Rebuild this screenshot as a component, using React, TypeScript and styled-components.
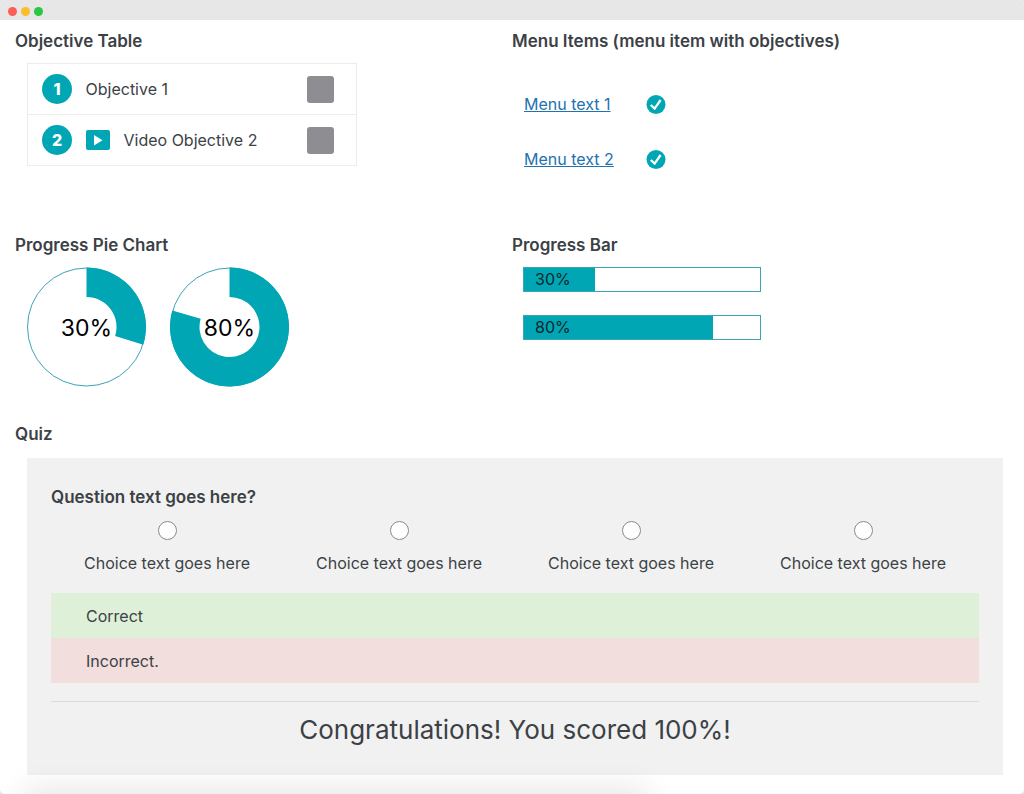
import React from "react";
import styled, { createGlobalStyle } from "styled-components";

const teal = "#00a6b4";
const ink = "#3c4146";

const GlobalStyle = createGlobalStyle`
  *, *::before, *::after { box-sizing: border-box; }
  body {
    margin: 0;
    background: #e4e4e4;
    color: ${ink};
    font: 400 16px/24px Inter, "Liberation Sans", sans-serif;
  }
`;

const Window = styled.div`
  position: relative;
  display: flex;
  flex-direction: column;
  min-height: 100vh;
  overflow: hidden;
  background: #fff;
  border-radius: 5px;
`;

const TitleBar = styled.header`
  display: flex;
  align-items: center;
  gap: 4px;
  height: 20px;
  padding: 2px 8px 0;
  background: #e7e7e7;
`;

const Light = styled.span<{ $color: string }>`
  width: 9px;
  height: 9px;
  border-radius: 50%;
  background: ${(p) => p.$color};
`;

const Content = styled.main`
  display: grid;
  grid-template-columns: 1fr 1fr;
  padding: 9px 15px 18px;
`;

const Section = styled.section<{ $wide?: boolean; $space?: number }>`
  grid-column: ${(p) => (p.$wide ? "1 / -1" : "auto")};
  padding-bottom: ${(p) => p.$space ?? 0}px;
`;

const Heading = styled.h2`
  margin: 0;
  font-size: 17px;
  line-height: 24px;
  font-weight: 600;
`;

const ObjectiveTable = styled.table`
  width: 330px;
  max-width: 100%;
  margin: 10px 0 0 12px;
  border: 1px solid #ececec;
  border-collapse: collapse;
`;

const ObjectiveRow = styled.tr`
  height: 51px;
  border-top: 1px solid #ececec;
`;

const NumberCell = styled.th`
  width: 58px;
  padding: 0 0 0 14px;
`;

const NumberBadge = styled.span`
  display: flex;
  align-items: center;
  justify-content: center;
  width: 30px;
  height: 30px;
  border-radius: 50%;
  background: ${teal};
  color: #fff;
  font-weight: 800;
`;

const NameCell = styled.td`
  padding: 0;
`;

const ObjectiveName = styled.label`
  display: flex;
  align-items: center;
  gap: 14px;
`;

const StatusCell = styled.td`
  width: 50px;
  padding: 0;
`;

const StatusBox = styled.input`
  appearance: none;
  display: block;
  width: 27px;
  height: 27px;
  margin: 0;
  border-radius: 3px;
  background: #8e8e92;
  &:checked { background: ${teal}; }
`;

const MenuList = styled.ul`
  display: flex;
  flex-direction: column;
  gap: 31px;
  margin: 39px 0 0 12px;
  padding: 0;
  list-style: none;
`;

const MenuItem = styled.li`
  display: grid;
  grid-template-columns: 122px 20px;
  align-items: center;
`;

const MenuLink = styled.a`
  justify-self: start;
  color: #2271b1;
`;

const PieRow = styled.div`
  display: flex;
  gap: 23px;
  margin: 10px 0 0 11px;
`;

const PieText = styled.text`
  fill: #000;
  font-size: 23px;
  text-anchor: middle;
`;

const BarList = styled.div`
  display: flex;
  flex-direction: column;
  gap: 23px;
  width: 238px;
  margin: 10px 0 0 11px;
`;

const Bar = styled.div`
  height: 25px;
  border: 1px solid #3aa5b4;
`;

const BarFill = styled.div`
  height: 100%;
  padding-left: 11px;
  background: ${teal};
  color: #08282b;
  line-height: 23px;
`;

const Quiz = styled.form`
  margin: 12px 6px 0 12px;
  padding: 27px 24px;
  background: #f1f1f1;
`;

const Question = styled.fieldset`
  margin: 0;
  padding: 0;
  border: 0;
`;

const QuestionText = styled.legend`
  padding: 0;
  font-size: 17px;
  font-weight: 600;
`;

const Choices = styled.div`
  display: grid;
  grid-template-columns: repeat(4, 1fr);
  padding: 12px 0 18px;
`;

const Choice = styled.label`
  display: flex;
  flex-direction: column;
  align-items: center;
  gap: 11px;
`;

const Radio = styled.input`
  appearance: none;
  width: 19px;
  height: 19px;
  margin: 0;
  border: 1px solid #8a8a8a;
  border-radius: 50%;
  background: #fff;
  &:checked { border: 6px solid ${teal}; }
`;

const Feedback = styled.p<{ $tone: "correct" | "incorrect" }>`
  margin: 0;
  padding: 11px 35px 10px;
  background: ${(p) => (p.$tone === "correct" ? "#def0d8" : "#f1dedd")};
`;

const Divider = styled.hr`
  height: 1px;
  margin: 18px 0 10px;
  border: 0;
  background: #dcdcde;
`;

const Score = styled.p`
  margin: 0;
  font-size: 26px;
  line-height: 36px;
  text-align: center;
`;

const BottomShade = styled.div`
  position: absolute;
  left: 24px;
  right: 376px;
  bottom: -20px;
  height: 20px;
  box-shadow: 0 0 32px rgba(0, 0, 0, 0.16);
`;

function VideoIcon() {
  return (
    <svg width="24" height="20" viewBox="0 0 24 20" aria-hidden="true">
      <rect width="24" height="20" rx="2" fill={teal} />
      <path d="M8 5v10.500l8.500-5.250z" fill="#fff" />
    </svg>
  );
}

function CheckIcon() {
  return (
    <svg width="20" height="20" viewBox="0 0 20 20" aria-hidden="true">
      <circle cx="10" cy="10.500" r="9.500" fill={teal} />
      <path d="M4.800 11l3.800 3.600 6-8.600" fill="none" stroke="#fff" strokeWidth="2.300" />
    </svg>
  );
}

function Pie({ value }: { value: number }) {
  const angle = (value / 100) * 2 * Math.PI * 0.993;
  const point = (r: number) => `${60.5 + r * Math.sin(angle)} ${60 - r * Math.cos(angle)}`;
  const large = value > 50 ? 1 : 0;
  return (
    <svg width="120" height="120" viewBox="0 0 120 120" role="img" aria-label={`${value}%`}>
      <circle cx="60.500" cy="60" r="59" fill="#fff" stroke="#3aa5b4" />
      <path
        d={`M60.500 0.500A59.500 59.500 0 ${large} 1 ${point(59.5)}L${point(30)}A30 30 0 ${large} 0 60.500 30z`}
        fill={teal}
      />
      <PieText x="60.500" y="69">{value}%</PieText>
    </svg>
  );
}

const objectives = [
  { id: 1, name: "Objective 1", video: false },
  { id: 2, name: "Video Objective 2", video: true },
];
const progress = [30, 80];
const choices = [1, 2, 3, 4];

export default function App() {
  return (
    <>
      <GlobalStyle />
      <Window>
        <TitleBar>
          <Light $color="#fb5f57" />
          <Light $color="#f9bd2e" />
          <Light $color="#29c840" />
        </TitleBar>
        <Content>
          <Section $space={67}>
            <Heading>Objective Table</Heading>
            <ObjectiveTable>
              <tbody>
                {objectives.map((o) => (
                  <ObjectiveRow key={o.id}>
                    <NumberCell scope="row">
                      <NumberBadge>{o.id}</NumberBadge>
                    </NumberCell>
                    <NameCell>
                      <ObjectiveName htmlFor={`objective-${o.id}`}>
                        {o.video && <VideoIcon />}
                        {o.name}
                      </ObjectiveName>
                    </NameCell>
                    <StatusCell>
                      <StatusBox type="checkbox" id={`objective-${o.id}`} />
                    </StatusCell>
                  </ObjectiveRow>
                ))}
              </tbody>
            </ObjectiveTable>
          </Section>
          <Section>
            <Heading>Menu Items (menu item with objectives)</Heading>
            <MenuList>
              {[1, 2].map((n) => (
                <MenuItem key={n}>
                  <MenuLink href={`#menu-${n}`}>Menu text {n}</MenuLink>
                  <CheckIcon />
                </MenuItem>
              ))}
            </MenuList>
          </Section>
          <Section $space={35}>
            <Heading>Progress Pie Chart</Heading>
            <PieRow>
              {progress.map((v) => (
                <Pie key={v} value={v} />
              ))}
            </PieRow>
          </Section>
          <Section>
            <Heading>Progress Bar</Heading>
            <BarList>
              {progress.map((v) => (
                <Bar key={v} role="progressbar" aria-valuenow={v} aria-label="Progress">
                  <BarFill style={{ width: `${v}%` }}>{v}%</BarFill>
                </Bar>
              ))}
            </BarList>
          </Section>
          <Section $wide>
            <Heading>Quiz</Heading>
            <Quiz>
              <Question>
                <QuestionText>Question text goes here?</QuestionText>
                <Choices>
                  {choices.map((c) => (
                    <Choice key={c}>
                      <Radio type="radio" name="answer" value={c} />
                      Choice text goes here
                    </Choice>
                  ))}
                </Choices>
              </Question>
              <Feedback $tone="correct">Correct</Feedback>
              <Feedback $tone="incorrect">Incorrect.</Feedback>
              <Divider />
              <Score>Congratulations! You scored 100%!</Score>
            </Quiz>
          </Section>
        </Content>
        <BottomShade />
      </Window>
    </>
  );
}
